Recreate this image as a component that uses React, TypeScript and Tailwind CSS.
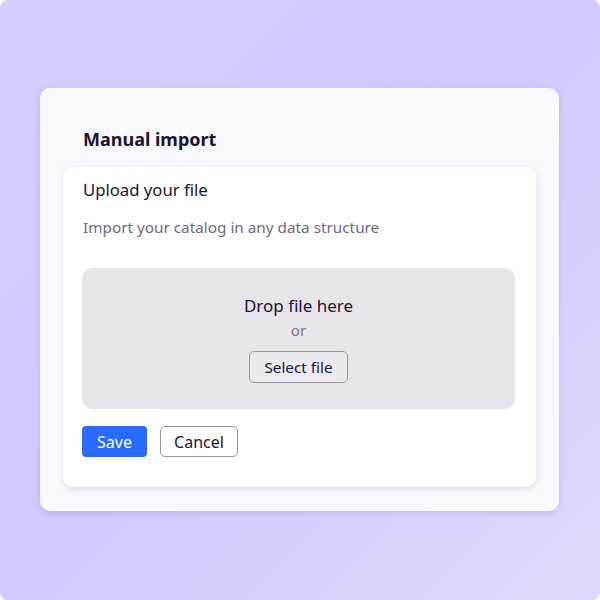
import React from 'react';

export default function App() {
  return (
    <div
      className="w-[600px] h-[600px] rounded-lg bg-gradient-to-br from-[#d6ccff] via-[#d4c8fe] to-[#e0d9fd] pt-[88px] px-[40px]"
      style={{ fontFamily: '"Noto Sans", "Open Sans", sans-serif' }}
    >
      <div className="w-[519px] h-[423px] rounded-[10px] bg-[#f9f8fe] shadow-[0_2px_6px_rgba(90,70,160,0.18)] px-[23px] pt-[37px]">
        <h1 className="pl-5 text-[18px] leading-[28px] font-bold text-[#1b1433]">Manual import</h1>

        <div className="mt-[14px] h-[320px] rounded-[10px] bg-white shadow-[0_2px_6px_rgba(90,70,160,0.16)] pl-[19px] pr-[21px] pt-[11px]">
          <h2 className="pl-px text-[16.7px] leading-[24px] text-[#1b1433]">Upload your file</h2>
          <p className="pl-px mt-[13px] text-[15.3px] leading-[24px] text-[#71687f]">
            Import your catalog in any data structure
          </p>

          <div className="mt-[29px] h-[141px] rounded-[10px] bg-[#e7e4eb] flex flex-col items-center pt-[26px]">
            <div className="text-[17px] leading-[24px] text-[#1b1433]">Drop file here</div>
            <div className="text-[15px] leading-[22px] text-[#7c7589] mt-[1px]">or</div>
            <button className="mt-[10px] h-[32px] w-[99px] rounded-[5px] border border-[#9b95a2] bg-[#ebe8ee] text-[15.3px] text-[#1b1433]">
              Select file
            </button>
          </div>

          <div className="mt-[17px] flex gap-[13px]">
            <button className="h-[31px] w-[65px] rounded-[4px] bg-[#2a6bff] text-[16px] text-white">Save</button>
            <button className="h-[31px] w-[78px] rounded-[5px] border border-[#9b95a2] bg-white text-[16px] text-[#1b1433]">
              Cancel
            </button>
          </div>
        </div>
      </div>
    </div>
  );
}
